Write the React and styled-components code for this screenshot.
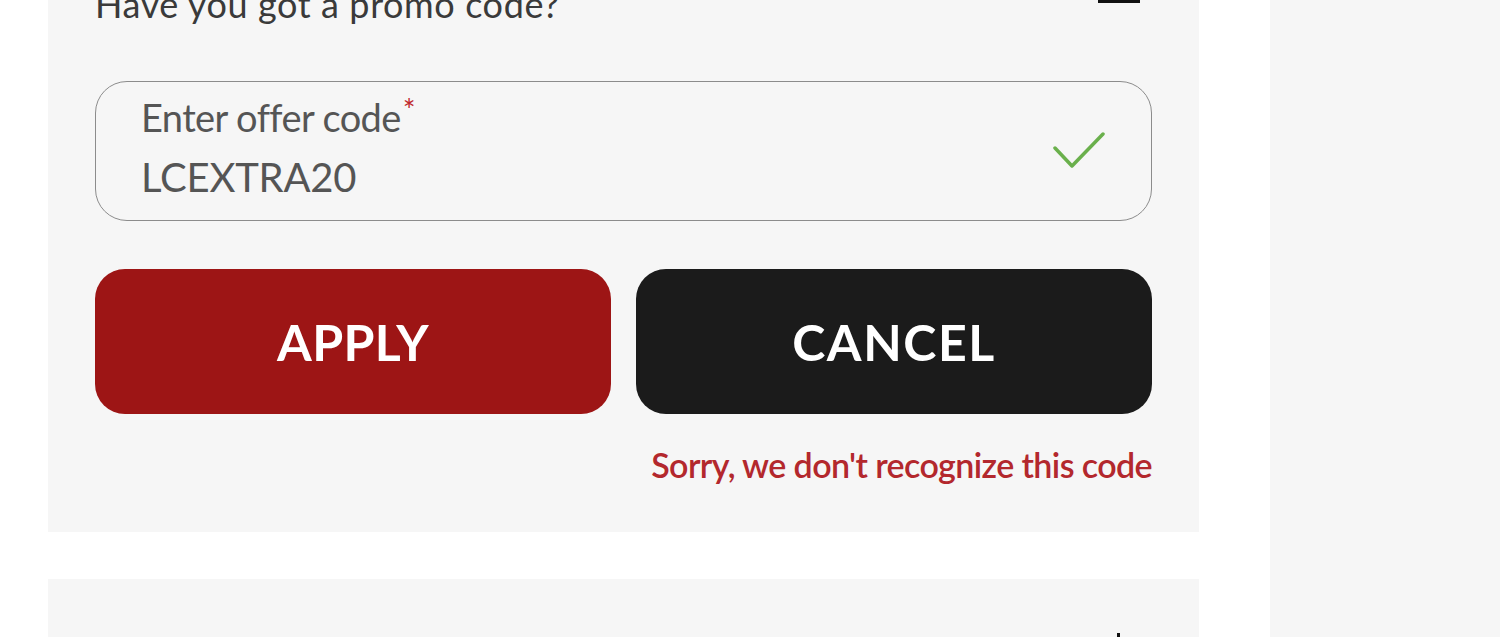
import React from "react";
import styled, { createGlobalStyle } from "styled-components";

const Global = createGlobalStyle`
  html, body { margin: 0; padding: 0; background: #ffffff; }
  body { font-family: "Lato", "Noto Sans", sans-serif; overflow: hidden; }
  * { box-sizing: border-box; }
`;

const Page = styled.div`
  display: flex;
  height: 637px;
  overflow: hidden;
  padding-left: 48px;
  gap: 71px;
`;

const Main = styled.div`
  width: 1151px;
  display: flex;
  flex-direction: column;
  gap: 47px;
`;

const Side = styled.aside`
  flex: 1;
  background: #f6f6f6;
`;

const Card = styled.section`
  background: #f6f6f6;
  padding: 0 47px 47px 47px;
  display: flex;
  flex-direction: column;
`;

const CardHeader = styled.div`
  display: flex;
  align-items: flex-start;
  justify-content: space-between;
  height: ${(p) => p.$h || 60}px;
  margin-top: ${(p) => p.$mt || 0}px;
  padding-top: ${(p) => p.$pt || 0}px;
`;

const HeaderTitle = styled.h2`
  margin: 0;
  font-weight: 400;
  font-size: 36px;
  line-height: 40px;
  color: #3a3a3a;
  letter-spacing: 0.6px;
`;

const Toggle = styled.span`
  position: relative;
  width: 42px;
  height: 42px;
  margin-right: 12px;
  margin-top: ${(p) => p.$mt || 0}px;
  flex-shrink: 0;
  &::before {
    content: "";
    position: absolute;
    left: 0;
    right: 0;
    top: 19px;
    height: 3px;
    background: #111;
  }
  &::after {
    content: "";
    display: ${(p) => (p.$plus ? "block" : "none")};
    position: absolute;
    top: 0;
    bottom: 0;
    left: 19px;
    width: 3px;
    background: #111;
  }
`;

const Field = styled.div`
  margin-top: 57px;
  height: 140px;
  border: 1.5px solid #8c8c8c;
  border-radius: 32px;
  display: flex;
  align-items: flex-start;
  justify-content: space-between;
  padding: 13px 46px 0 45px;
`;

const FieldText = styled.div`
  display: flex;
  flex-direction: column;
  gap: 16px;
`;

const Label = styled.label`
  font-size: 38px;
  line-height: 44px;
  color: #555;
  letter-spacing: -0.6px;
`;

const Req = styled.span`
  color: #c0282d;
  font-size: 30px;
  vertical-align: top;
  line-height: 28px;
  margin-left: 2px;
`;

const Value = styled.div`
  font-size: 40px;
  line-height: 44px;
  color: #555;
  letter-spacing: -0.2px;
`;

const CheckWrap = styled.span`
  align-self: center;
  margin-top: -13px;
  display: flex;
`;

const Actions = styled.div`
  margin-top: 48px;
  display: grid;
  grid-template-columns: 1fr 1fr;
  gap: 25px;
`;

const Btn = styled.button`
  height: 145px;
  border: none;
  border-radius: 30px;
  background: ${(p) => (p.$dark ? "#1b1b1b" : "#9d1515")};
  color: #fff;
  font-family: "Lato", sans-serif;
  font-weight: 700;
  font-size: 50px;
  letter-spacing: ${(p) => (p.$dark ? "1.6px" : "0.3px")};
  cursor: pointer;
`;

const ErrorMsg = styled.p`
  margin: 30px 0 0 0;
  text-align: right;
  color: #b3282d;
  font-size: 34px;
  font-weight: 600;
  letter-spacing: -0.6px;
`;

const Check = () => (
  <svg width="52" height="38" viewBox="0 0 52 38" fill="none">
    <path d="M2 16 L19 34 L50 2" stroke="#6ab04c" strokeWidth="3.5" strokeLinecap="round" strokeLinejoin="round" />
  </svg>
);

export default function App() {
  return (
    <>
      <Global />
      <Page>
        <Main>
          <Card>
            <CardHeader $h={40} $mt={-16}>
              <HeaderTitle>Have you got a promo code?</HeaderTitle>
              <Toggle $mt={-3} />
            </CardHeader>
            <Field>
              <FieldText>
                <Label>
                  Enter offer code<Req>*</Req>
                </Label>
                <Value>LCEXTRA20</Value>
              </FieldText>
              <CheckWrap>
                <Check />
              </CheckWrap>
            </Field>
            <Actions>
              <Btn>APPLY</Btn>
              <Btn $dark>CANCEL</Btn>
            </Actions>
            <ErrorMsg>Sorry, we don't recognize this code</ErrorMsg>
          </Card>
          <Card>
            <CardHeader $h={140} $pt={54}>
              <HeaderTitle />
              <Toggle $plus />
            </CardHeader>
          </Card>
        </Main>
        <Side />
      </Page>
    </>
  );
}
